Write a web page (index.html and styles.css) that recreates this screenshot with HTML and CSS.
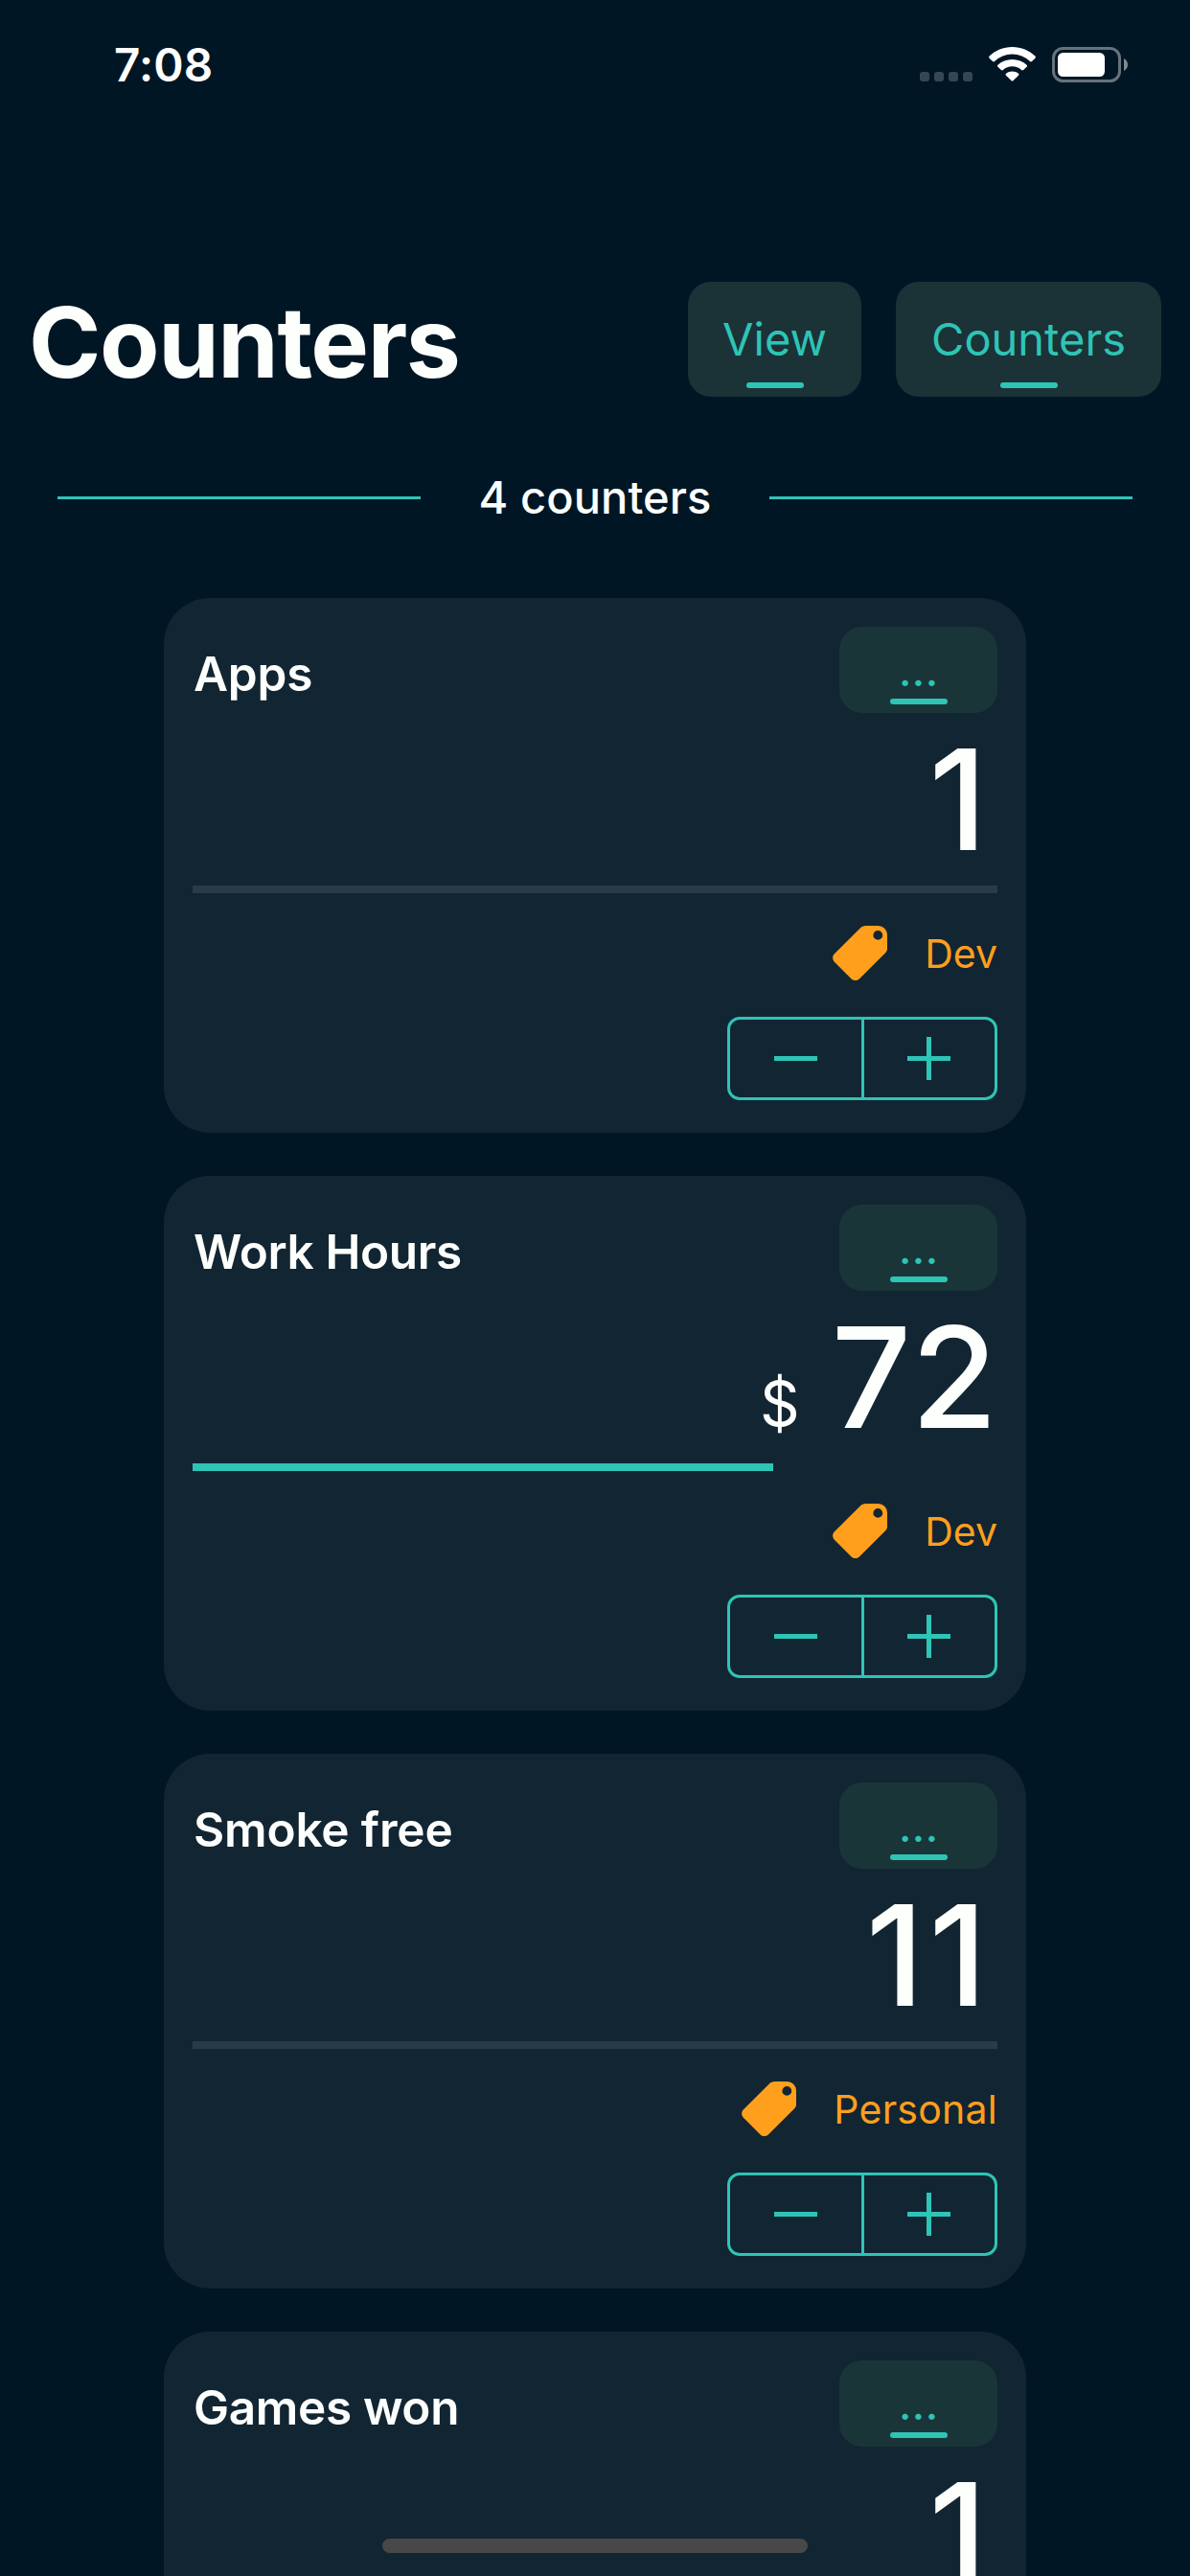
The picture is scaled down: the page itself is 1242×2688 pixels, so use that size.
FILE: index.html
```html
<!DOCTYPE html>
<html lang="en">
<head>
<meta charset="utf-8">
<title>Counters</title>
<link rel="stylesheet" href="styles.css">
</head>
<body>
<svg class="sprite" aria-hidden="true">
  <symbol id="tag" viewBox="0 0 57 57">
    <path fill-rule="evenodd" d="M34.6 0H47.5A9.500 9.500 0 0 1 57 9.500V24.200Q57 26.400 55.400 28L27.800 55.600Q23.700 58.700 19.600 55.600L1.400 37.200Q-1.200 33.400 1.400 29.800L29.800 1.600Q31.600 0 34.600 0ZM47.300 5A4.900 4.900 0 1 0 47.300 14.800A4.900 4.900 0 1 0 47.300 5Z"/>
  </symbol>
  <symbol id="minus" viewBox="0 0 45 45"><path d="M0 20H45V25H0Z"/></symbol>
  <symbol id="plus" viewBox="0 0 45 45"><path d="M0 20H20V0H25V20H45V25H25V45H20V25H0Z"/></symbol>
</svg>
<div class="screen">
  <div class="status">
    <span class="time">7:08</span>
    <div class="status-icons">
      <div class="cell"><i></i><i></i><i></i><i></i></div>
      <svg class="wifi" width="49" height="36" viewBox="0 0 49 36">
        <path d="M24.500 0C15.200 0 6.800 3.600 .6 9.500Q-.4 10.600 .6 11.700L4 15.100Q5 16 6 15.100A26.600 26.600 0 0 1 43 15.100Q44 16 45 15.100L48.400 11.700Q49.400 10.600 48.400 9.500C42.200 3.600 33.800 0 24.500 0Z"/>
        <path d="M24.500 12.900C18.700 12.900 13.500 15 9.400 18.700Q8.400 19.700 9.400 20.700L12.900 24.100Q13.900 25 14.900 24.100A14.200 14.200 0 0 1 34.100 24.100Q35.100 25 36.100 24.100L39.600 20.700Q40.600 19.700 39.600 18.700C35.500 15 30.300 12.900 24.500 12.900Z"/>
        <path d="M24.500 25.500C22 25.500 19.800 26.300 18 27.800Q17.100 28.700 18 29.700L23.400 35.100Q24.500 36.100 25.600 35.100L31 29.700Q31.900 28.700 31 27.800C29.200 26.300 27 25.500 24.500 25.500Z"/>
      </svg>
      <svg class="battery" width="79" height="37" viewBox="0 0 79 37">
        <rect class="shell" x="1.500" y="1.500" width="69" height="34" rx="10"/>
        <rect x="6" y="6" width="49" height="25" rx="5.500"/>
        <path class="nub" d="M75 12V25Q79 22.600 79 18.500Q79 14.400 75 12Z"/>
      </svg>
    </div>
  </div>

  <header class="header">
    <h1 class="title">Counters</h1>
    <div class="actions">
      <button class="action view"><span>View</span></button>
      <button class="action sort"><span>Counters</span></button>
    </div>
  </header>

  <div class="summary"><span class="summary-text">4 counters</span></div>

  <main class="list">
    <article class="card">
      <div class="card-head"><h2 class="name">Apps</h2><button class="menu"><span>...</span></button></div>
      <div class="amount"><span class="value ones">1</span></div>
      <div class="progress"></div>
      <div class="tag"><svg><use href="#tag"/></svg><span>Dev</span></div>
      <div class="stepper"><button><svg><use href="#minus"/></svg></button><button><svg><use href="#plus"/></svg></button></div>
    </article>

    <article class="card">
      <div class="card-head"><h2 class="name tight">Work Hours</h2><button class="menu"><span>...</span></button></div>
      <div class="amount"><span class="unit">$</span><span class="value">72</span></div>
      <div class="progress active"><div class="bar" style="width:72.14%"></div></div>
      <div class="tag"><svg><use href="#tag"/></svg><span>Dev</span></div>
      <div class="stepper"><button><svg><use href="#minus"/></svg></button><button><svg><use href="#plus"/></svg></button></div>
    </article>

    <article class="card">
      <div class="card-head"><h2 class="name">Smoke free</h2><button class="menu"><span>...</span></button></div>
      <div class="amount"><span class="value ones">11</span></div>
      <div class="progress"></div>
      <div class="tag"><svg><use href="#tag"/></svg><span class="personal">Personal</span></div>
      <div class="stepper"><button><svg><use href="#minus"/></svg></button><button><svg><use href="#plus"/></svg></button></div>
    </article>

    <article class="card">
      <div class="card-head"><h2 class="name tight">Games won</h2><button class="menu"><span>...</span></button></div>
      <div class="amount"><span class="value ones">1</span></div>
    </article>
  </main>
  <div class="home-indicator"></div>
</div>
</body>
</html>
```
FILE: styles.css
```css
:root {
  --bg: #001625;
  --card: #122533;
  --accent: #2ec4b6;
  --text: #fdfffc;
  --orange: #ff9f1c;
}
* { box-sizing: border-box; margin: 0; padding: 0; }
body {
  background: var(--bg);
  color: var(--text);
  font-family: Inter, "Liberation Sans", sans-serif;
}
button { border: 0; background: none; color: inherit; font: inherit; }
.sprite { display: none; }
.screen {
  position: relative;
  width: 1242px;
  height: 2688px;
  overflow: hidden;
}

/* status bar */
.status {
  display: flex;
  justify-content: space-between;
  align-items: center;
  height: 135px;
  padding: 0 65px 0 119px;
}
.time { font-size: 47.500px; font-weight: 600; line-height: 57px; color: #fff; letter-spacing: 0.2px; }
.status-icons { display: flex; align-items: flex-end; fill: #fff; }
.cell { display: flex; gap: 5px; margin: 0 17px 1px 0; }
.cell i { width: 10px; height: 10px; border-radius: 3px; background: #344753; }
.wifi { margin: 0 17px 1px 0; }
.shell { fill: none; stroke: #66737c; stroke-width: 3; }
.nub { fill: #7f8a92; }

/* page header */
.header {
  display: flex;
  justify-content: space-between;
  height: 279px;
  padding: 159px 30px 0 30px;
}
.title { font-size: 102px; font-weight: 700; line-height: 126px; letter-spacing: -1.4px; }
.actions { display: flex; gap: 36px; }
.action {
  display: flex;
  flex-direction: column;
  align-items: center;
  height: 120px;
  border-radius: 24px;
  background: #1b3236;
  color: var(--accent);
  font-size: 47px;
}
.view { width: 181px; }
.sort { width: 277px; }
.action::after, .menu::after {
  content: "";
  width: 60px;
  height: 6px;
  border-radius: 3px;
  background: var(--accent);
}
.action span { height: 105px; line-height: 120px; }

/* count divider */
.summary {
  display: flex;
  align-items: center;
  justify-content: center;
  height: 210px;
  padding: 0 60px;
}
.summary::before, .summary::after {
  content: "";
  width: 379px;
  height: 3px;
  background: var(--accent);
}
.summary-text {
  flex: 1;
  text-align: center;
  font-size: 47px;
  font-weight: 500;
  line-height: 60px;
  letter-spacing: 0.1px;
}

/* counter cards */
.list { display: grid; gap: 45px; width: 900px; margin: 0 auto; }
.card {
  display: flex;
  flex-direction: column;
  height: 558px;
  padding: 30px 30px 34px;
  border-radius: 48px;
  background: var(--card);
}
.card-head { display: flex; justify-content: space-between; height: 90px; }
.name { margin-left: 1px; font-size: 49.500px; font-weight: 600; line-height: 98px; letter-spacing: -0.15px; }
.name.tight { letter-spacing: -0.35px; }
.menu {
  display: flex;
  flex-direction: column;
  align-items: center;
  width: 165px;
  border-radius: 24px;
  background: #1a3538;
  color: var(--accent);
  font-size: 48px;
}
.menu span { height: 75px; line-height: 90px; }
.amount { display: flex; justify-content: flex-end; align-items: baseline; height: 180px; }
.value { font-size: 146px; font-weight: 500; line-height: 180px; }
.value.ones { letter-spacing: 5px; margin-right: 6px; }
.unit { align-self: flex-start; margin-right: 33px; font-size: 65px; line-height: 235px; }
.progress { flex: none; height: 8px; background: #293b48; }
.progress.active { background: none; }
.bar { height: 8px; background: var(--accent); }
.tag {
  display: flex;
  justify-content: flex-end;
  align-items: center;
  gap: 39px;
  height: 125px;
  margin-bottom: 4px;
  color: var(--orange);
  font-size: 41px;
}
.tag svg { width: 57px; height: 57px; fill: var(--orange); }
.personal { letter-spacing: 0.25px; }
.stepper {
  display: flex;
  align-self: flex-end;
  width: 282px;
  height: 87px;
  border: 3px solid var(--accent);
  border-radius: 13px;
}
.stepper button { display: flex; align-items: center; justify-content: center; flex: 1; }
.stepper button + button { border-left: 3px solid var(--accent); }
.stepper svg { width: 45px; height: 45px; fill: var(--accent); }

.home-indicator {
  position: absolute;
  left: 399px;
  bottom: 24px;
  width: 444px;
  height: 15px;
  border-radius: 8px;
  background: #484848;
}
```
